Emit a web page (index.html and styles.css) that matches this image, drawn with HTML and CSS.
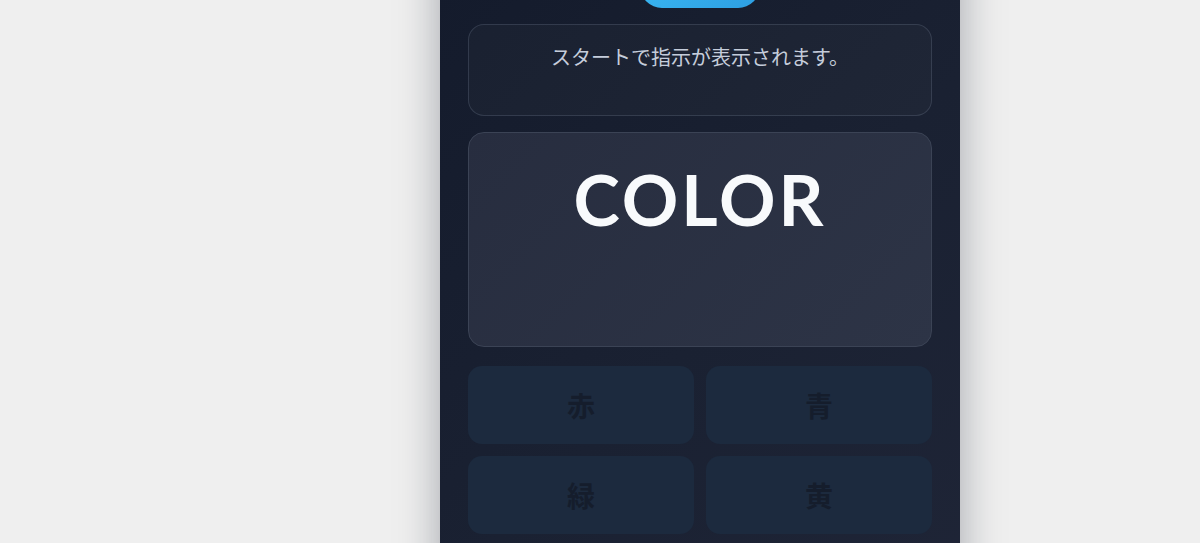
FILE: index.html
```html
<!DOCTYPE html>
<html lang="ja">
<head>
    <meta charset="UTF-8">
    <meta name="viewport" content="width=device-width, initial-scale=1.0">
    <title>Color Stroop</title>
    <link rel="stylesheet" href="styles.css">
</head>
<body>

<div class="app">
    <div class="app-header">
        <h1>カラー・ストループ</h1>
    </div>

    <button class="start-btn">スタート</button>

    <div class="instruction">スタートで指示が表示されます。</div>

    <div class="word-box">
        <div class="word">COLOR</div>
    </div>

    <div class="answers">
        <button class="answer" disabled>赤</button>
        <button class="answer" disabled>青</button>
        <button class="answer" disabled>緑</button>
        <button class="answer" disabled>黄</button>
    </div>

    <div class="result">スコア: 0　ミス: 0</div>
</div>

</body>
</html>
```

FILE: styles.css
```css
html, body {
    overflow: hidden;
}

body {
    font-family: Lato, "Noto Sans CJK JP", sans-serif;
    background-color: #efefef;
    color: #cbd5e1;
    display: flex;
    justify-content: center;
    align-items: center;
    box-sizing: border-box;
    height: 100vh;
    margin: 0;
    padding-left: 200px;
}

.app {
    width: 520px;
    box-sizing: border-box;
    padding: 28px;
    display: flex;
    flex-direction: column;
    gap: 16px;
    background: linear-gradient(135deg, #131a2b 0%, #1a2132 55%, #1f2537 100%);
    box-shadow: 0 10px 40px rgba(15, 23, 42, 0.34);
}

.app-header {
    height: 40px;
    display: flex;
    align-items: center;
    justify-content: center;
}

h1 {
    margin: 0;
    font-size: 22px;
    color: #f1f5f9;
}

.start-btn {
    align-self: center;
    width: 120px;
    height: 44px;
    border: none;
    border-radius: 22px;
    background: linear-gradient(135deg, #3bb8f2, #2d9fe3);
    color: #ffffff;
    font-family: inherit;
    font-size: 16px;
    font-weight: bold;
}

.instruction {
    height: 92px;
    box-sizing: border-box;
    padding: 16px 20px;
    border: 1px solid rgba(148, 163, 184, 0.2);
    border-radius: 16px;
    background: rgba(255, 255, 255, 0.025);
    font-size: 20px;
    line-height: 32px;
    text-align: center;
    color: #c5cddb;
}

.word-box {
    height: 215px;
    box-sizing: border-box;
    padding: 24px 20px;
    border: 1px solid #3b4355;
    border-radius: 16px;
    background: linear-gradient(135deg, #272d3f, #2d3446);
    text-align: center;
}

.word {
    font-size: 70px;
    font-weight: bold;
    line-height: 1.2;
    letter-spacing: 3px;
    color: #f8fafc;
}

.answers {
    margin-top: 3px;
    display: grid;
    grid-template-columns: 1fr 1fr;
    gap: 12px;
}

.answer {
    height: 78px;
    border: none;
    border-radius: 14px;
    background-color: #1c2a3e;
    color: #151d2c;
    font-family: inherit;
    font-size: 28px;
    font-weight: bold;
}

.result {
    height: 85px;
    font-size: 16px;
    text-align: center;
    color: #94a3b8;
}
```
